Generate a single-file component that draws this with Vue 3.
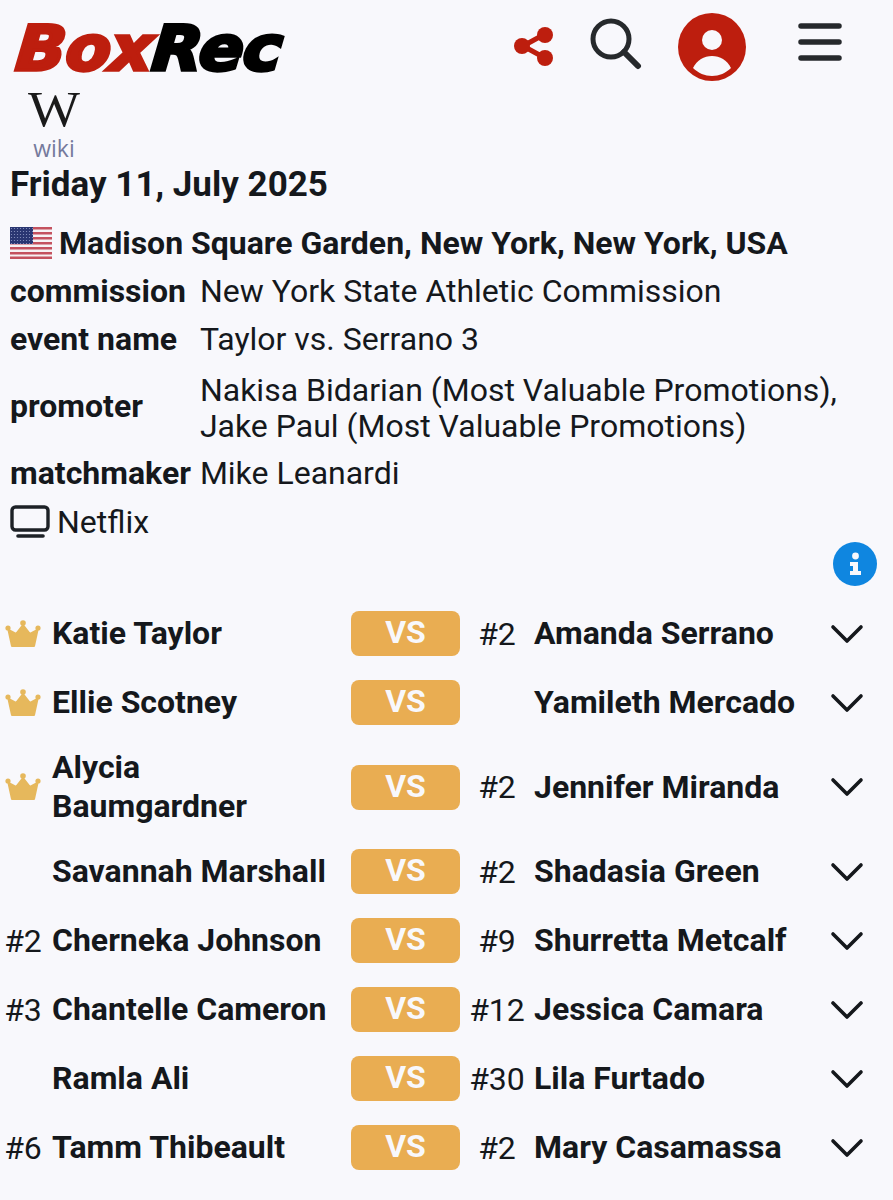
<script setup>
const details = [
  { label: 'commission', lines: ['New York State Athletic Commission'] },
  { label: 'event name', lines: ['Taylor vs. Serrano 3'] },
  { label: 'promoter', lines: ['Nakisa Bidarian (Most Valuable Promotions),', 'Jake Paul (Most Valuable Promotions)'] },
  { label: 'matchmaker', lines: ['Mike Leanardi'] }
]

const bouts = [
  { crown: true, rankA: '', nameA: 'Katie Taylor', rankB: '#2', nameB: 'Amanda Serrano' },
  { crown: true, rankA: '', nameA: 'Ellie Scotney', rankB: '', nameB: 'Yamileth Mercado' },
  { crown: true, rankA: '', nameA: 'Alycia Baumgardner', rankB: '#2', nameB: 'Jennifer Miranda' },
  { crown: false, rankA: '', nameA: 'Savannah Marshall', rankB: '#2', nameB: 'Shadasia Green' },
  { crown: false, rankA: '#2', nameA: 'Cherneka Johnson', rankB: '#9', nameB: 'Shurretta Metcalf' },
  { crown: false, rankA: '#3', nameA: 'Chantelle Cameron', rankB: '#12', nameB: 'Jessica Camara' },
  { crown: false, rankA: '', nameA: 'Ramla Ali', rankB: '#30', nameB: 'Lila Furtado' },
  { crown: false, rankA: '#6', nameA: 'Tamm Thibeault', rankB: '#2', nameB: 'Mary Casamassa' }
]
</script>

<template>
  <div class="page">
    <header class="top">
      <div class="logo"><span class="box">Box</span><span class="rec">Rec</span></div>
      <nav class="actions">
        <svg class="share" viewBox="0 0 42 42" width="42" height="42">
          <path d="M10 21 L32 9 M10 21 L32 33" stroke="#bd1e0e" stroke-width="5" />
          <circle cx="9" cy="21" r="8" fill="#bd1e0e" />
          <circle cx="32" cy="10" r="8" fill="#bd1e0e" />
          <circle cx="32" cy="33" r="8" fill="#bd1e0e" />
        </svg>
        <svg class="search" viewBox="0 0 52 52" width="52" height="52">
          <circle cx="21" cy="21" r="18" fill="none" stroke="#26292c" stroke-width="5" />
          <path d="M34 34 L48 48" stroke="#26292c" stroke-width="6" stroke-linecap="round" />
        </svg>
        <svg class="user" viewBox="0 0 68 68" width="68" height="68">
          <circle cx="34" cy="34" r="34" fill="#bd1e0e" />
          <circle cx="34" cy="27" r="10" fill="#f8f8fc" />
          <path d="M15 55 C19 47 26 43 34 43 C42 43 49 47 53 55 C48 60 41 63 34 63 C27 63 20 60 15 55 Z" fill="#f8f8fc" />
        </svg>
        <svg class="burger" viewBox="0 0 44 38" width="44" height="38">
          <path d="M3 3 H41 M3 19 H41 M3 35 H41" stroke="#26292c" stroke-width="5.5" stroke-linecap="round" />
        </svg>
      </nav>
    </header>

    <div class="wiki">
      <svg class="wiki-mark" viewBox="0 0 52 46" width="52" height="46">
        <text x="0" y="33" textLength="52" lengthAdjust="spacingAndGlyphs" class="wiki-w">W</text>
      </svg>
      <span class="wiki-label">wiki</span>
    </div>

    <h1 class="date">Friday 11, July 2025</h1>

    <div class="venue">
      <svg class="flag" viewBox="0 0 42 32" width="42" height="32">
        <defs>
          <pattern id="stars" width="3" height="3" patternUnits="userSpaceOnUse">
            <circle cx="1.5" cy="1.5" r="0.6" fill="#8f98c4" />
          </pattern>
        </defs>
        <rect width="42" height="32" fill="#f6f2f4" />
        <path d="M0 1.2 H42 M0 6.2 H42 M0 11.2 H42 M0 16.2 H42 M0 21.2 H42 M0 26.2 H42 M0 30.8 H42" stroke="#c4525f" stroke-width="2.4" />
        <rect width="23" height="17" fill="#2a3672" />
        <rect width="23" height="17" fill="url(#stars)" />
      </svg>
      <span>Madison Square Garden, New York, New York, USA</span>
    </div>

    <div class="details">
      <template v-for="d in details" :key="d.label">
        <div class="label">{{ d.label }}</div>
        <div :class="['value', { multi: d.lines.length > 1 }]">
          <div v-for="line in d.lines" :key="line">{{ line }}</div>
        </div>
      </template>
    </div>

    <div class="tv">
      <svg viewBox="0 0 40 34" width="40" height="34">
        <rect x="2" y="2" width="36" height="23" rx="3.5" fill="none" stroke="#1d2126" stroke-width="3.4" />
        <path d="M8 31 H33" stroke="#1d2126" stroke-width="3.6" stroke-linecap="round" />
      </svg>
      <span>Netflix</span>
    </div>

    <div class="info-row">
      <svg viewBox="0 0 44 44" width="44" height="44">
        <circle cx="22" cy="22" r="22" fill="#0f86e0" />
        <circle cx="22.500" cy="14" r="3.4" fill="#f8f8fc" />
        <path d="M17 20 H25 V29 H28 V33 H17 V29 H20 V24 H17 Z" fill="#f8f8fc" />
      </svg>
    </div>

    <div class="bouts">
      <div v-for="b in bouts" :key="b.nameA" class="bout">
        <div class="rank">
          <svg v-if="b.crown" viewBox="0 0 36 30" width="36" height="30">
            <path d="M7 27 L3.500 11 L11 15 L18 6 L25 15 L32.500 11 L29 27 Z" fill="#e6b85c" stroke="#e6b85c" stroke-width="2" stroke-linejoin="round" />
            <circle cx="3" cy="9" r="2.6" fill="#e6b85c" />
            <circle cx="18" cy="4" r="2.8" fill="#e6b85c" />
            <circle cx="33" cy="9" r="2.6" fill="#e6b85c" />
          </svg>
          <template v-else>{{ b.rankA }}</template>
        </div>
        <div class="name name-a">{{ b.nameA }}</div>
        <div class="vs">VS</div>
        <div class="rank">{{ b.rankB }}</div>
        <div class="name">{{ b.nameB }}</div>
        <svg viewBox="0 0 34 22" width="34" height="22">
          <path d="M3 4 L17 18 L31 4" fill="none" stroke="#15181c" stroke-width="3.6" stroke-linecap="round" stroke-linejoin="round" />
        </svg>
      </div>
    </div>
  </div>
</template>

<style scoped>
.page {
  width: 893px;
  height: 1200px;
  overflow: hidden;
  background: #f8f8fc;
  color: #15181c;
  font-family: Roboto, "Liberation Sans", sans-serif;
  font-size: 32px;
}
.top {
  display: flex;
  justify-content: space-between;
  height: 88px;
  padding: 14px 51px 0 13px;
  box-sizing: border-box;
}
.logo {
  font-family: "DejaVu Sans", sans-serif;
  font-size: 62px;
  font-weight: 700;
  font-style: italic;
  line-height: 70px;
  letter-spacing: -0.5px;
  -webkit-text-stroke: 3.5px currentColor;
  transform: skewX(-5deg) scaleX(1.06);
  transform-origin: left bottom;
}
.box {
  color: #bd1e0e;
}
.rec {
  color: #000;
}
.actions {
  display: flex;
  align-items: flex-start;
}
.share {
  margin-top: 11px;
}
.search {
  margin: 4px 0 0 35px;
}
.user {
  margin: -1px 0 0 36px;
}
.burger {
  margin: 9px 0 0 52px;
}
.wiki {
  display: flex;
  flex-direction: column;
  align-items: center;
  width: 52px;
  height: 73px;
  margin-left: 28px;
  padding-top: 5px;
  box-sizing: border-box;
}
.wiki-mark {
  flex: none;
  overflow: visible;
}
.wiki-w {
  font-family: "Liberation Serif", serif;
  font-size: 50px;
  fill: #1a1a1a;
}
.wiki-label {
  margin-top: -5px;
  font-family: "Open Sans", sans-serif;
  font-size: 23px;
  line-height: 28px;
  color: #757a9c;
}
.date {
  margin: 0 0 0 10px;
  font-size: 35px;
  font-weight: 700;
  line-height: 48px;
}
.venue {
  display: flex;
  align-items: center;
  gap: 7px;
  height: 48px;
  margin: 10px 0 0 10px;
  font-weight: 700;
  line-height: 48px;
}
.details {
  display: grid;
  grid-template-columns: max-content 1fr;
  column-gap: 9px;
  align-items: center;
  margin-left: 10px;
}
.label {
  font-weight: 700;
  line-height: 48px;
}
.value {
  padding: 6px 0;
  line-height: 36px;
}
.value.multi {
  padding: 9px 0 5px;
}
.tv {
  display: flex;
  align-items: center;
  gap: 7px;
  height: 48px;
  margin: 1px 0 0 10px;
}
.info-row {
  display: flex;
  justify-content: flex-end;
  margin-top: -4px;
  padding-right: 16px;
}
.bouts {
  margin-top: 13px;
}
.bout {
  display: grid;
  grid-template-columns: 46px 305px 109px 74px 296px 34px;
  align-items: center;
  min-height: 69px;
}
.rank {
  display: flex;
  align-items: center;
  justify-content: center;
}
.name {
  padding: 11px 0;
  font-weight: 700;
  line-height: 39px;
}
.name-a {
  padding-left: 6px;
  padding-right: 19px;
}
.vs {
  height: 45px;
  border-radius: 8px;
  background: #e9ad52;
  color: #f8f8fc;
  font-weight: 700;
  text-align: center;
  line-height: 42px;
}
</style>
